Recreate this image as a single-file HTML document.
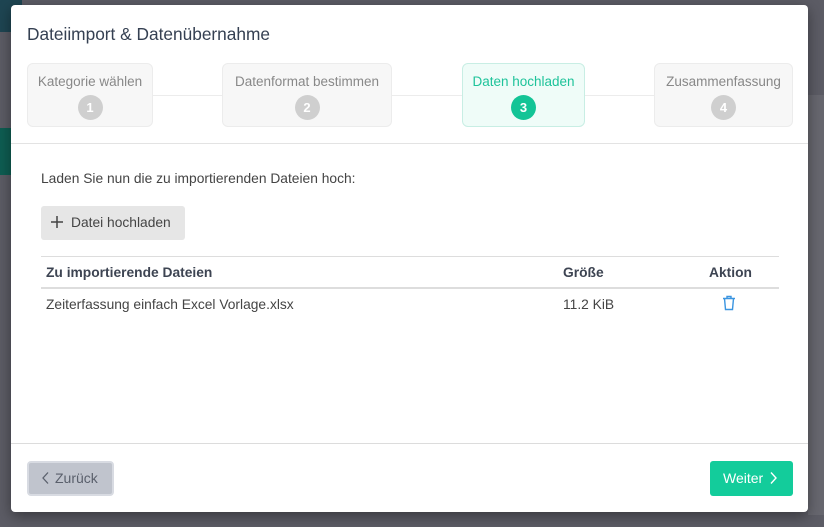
<!DOCTYPE html>
<html><head><meta charset="utf-8"><style>
*{box-sizing:border-box;margin:0;padding:0}
body{width:824px;height:527px;overflow:hidden;background:#5c5c65;font-family:"Liberation Sans",sans-serif;position:relative}
.abs{position:absolute}
.modal{left:11px;top:5px;width:797px;height:507px;background:#fff;border-radius:4px;box-shadow:0 4px 14px rgba(0,0,0,.4)}
.title{left:16px;top:19px;font-size:17.3px;color:#354052}
.step{top:58px;height:64px;background:#f7f7f7;border:1px solid #ececec;border-radius:6px;text-align:center;font-size:13.5px;color:#888;padding-top:10px}
.step .n{width:25px;height:25px;border-radius:50%;background:#cfcfcf;color:#fff;font-weight:bold;font-size:13px;line-height:25px;margin:6px auto 0}
.step.act{background:#effcf8;border-color:#c8eee4;color:#1ec39a}
.step.act .n{background:#13c496}
.line{top:90px;height:1px;background:#ececec}
.txt{font-size:13.8px;color:#444}
</style></head><body>
<div class="abs" style="left:0;top:0;width:22px;height:32px;background:#1e4552"></div>
<div class="abs" style="left:0;top:128px;width:11px;height:47px;background:#0e5d52"></div>
<div class="abs" style="left:808px;top:95px;width:16px;height:420px;background:#67676f"></div>
<div class="abs modal">
  <div class="abs title">Dateiimport &amp; Datenübernahme</div>
  <div class="abs line" style="left:140px;width:520px"></div>
  <div class="abs step" style="left:16px;width:126px">Kategorie wählen<div class="n">1</div></div>
  <div class="abs step" style="left:211px;width:170px">Datenformat bestimmen<div class="n">2</div></div>
  <div class="abs step act" style="left:451px;width:123px">Daten hochladen<div class="n">3</div></div>
  <div class="abs step" style="left:643px;width:139px">Zusammenfassung<div class="n">4</div></div>
  <div class="abs" style="left:0;top:138px;width:797px;height:1px;background:#e3e3e3"></div>
  <div class="abs txt" style="left:30px;top:166px">Laden Sie nun die zu importierenden Dateien hoch:</div>
  <div class="abs" style="left:30px;top:201px;width:144px;height:34px;background:#e6e6e6;border-radius:3px;font-size:13.8px;color:#444;line-height:34px;padding-left:10px"><svg width="12" height="12" viewBox="0 0 12 12" style="vertical-align:-1px;margin-right:8px" stroke="#444" stroke-width="1.5"><path d="M6 0v12M0 6h12"/></svg>Datei hochladen</div>
  <div class="abs" style="left:30px;top:251px;width:738px;height:1px;background:#ddd"></div>
  <div class="abs" style="left:30px;top:282px;width:738px;height:2px;background:#ddd"></div>
  <div class="abs txt" style="left:35px;top:260px;font-weight:bold;color:#3d4452">Zu importierende Dateien</div>
  <div class="abs txt" style="left:552px;top:260px;font-weight:bold;color:#3d4452">Größe</div>
  <div class="abs txt" style="left:698px;top:260px;font-weight:bold;color:#3d4452">Aktion</div>
  <div class="abs txt" style="left:35px;top:292px">Zeiterfassung einfach Excel Vorlage.xlsx</div>
  <div class="abs txt" style="left:552px;top:292px">11.2 KiB</div>
  <svg class="abs" style="left:711px;top:290px" width="14" height="16" viewBox="0 0 14 16" fill="none" stroke="#3b95e0" stroke-width="1.4"><path d="M1 3.5h12M5 3.5V1.5h4v2M2.5 3.5l1 11h7l1-11"/></svg>
  <div class="abs" style="left:0;top:438px;width:797px;height:1px;background:#dcdcdc"></div>
  <div class="abs" style="left:16px;top:456px;width:87px;height:35px;background:#c0c4cd;border:2px solid #d8dbe2;border-radius:4px;font-size:14px;color:#5a606c;line-height:31px;padding-left:13px"><svg width="7" height="12" viewBox="0 0 7 12" style="vertical-align:-1px;margin-right:6px" fill="none" stroke="#5a606c" stroke-width="1.3"><path d="M6 0.5L1 6l5 5.5"/></svg>Zurück</div>
  <div class="abs" style="left:699px;top:456px;width:83px;height:35px;background:#13cc9b;border-radius:3px;font-size:14px;color:#fff;line-height:35px;padding-left:13px">Weiter<svg width="7" height="12" viewBox="0 0 7 12" style="vertical-align:-1px;margin-left:7px" fill="none" stroke="#fff" stroke-width="1.4"><path d="M1 0.5L6 6l-5 5.5"/></svg></div>
</div>
</body></html>
